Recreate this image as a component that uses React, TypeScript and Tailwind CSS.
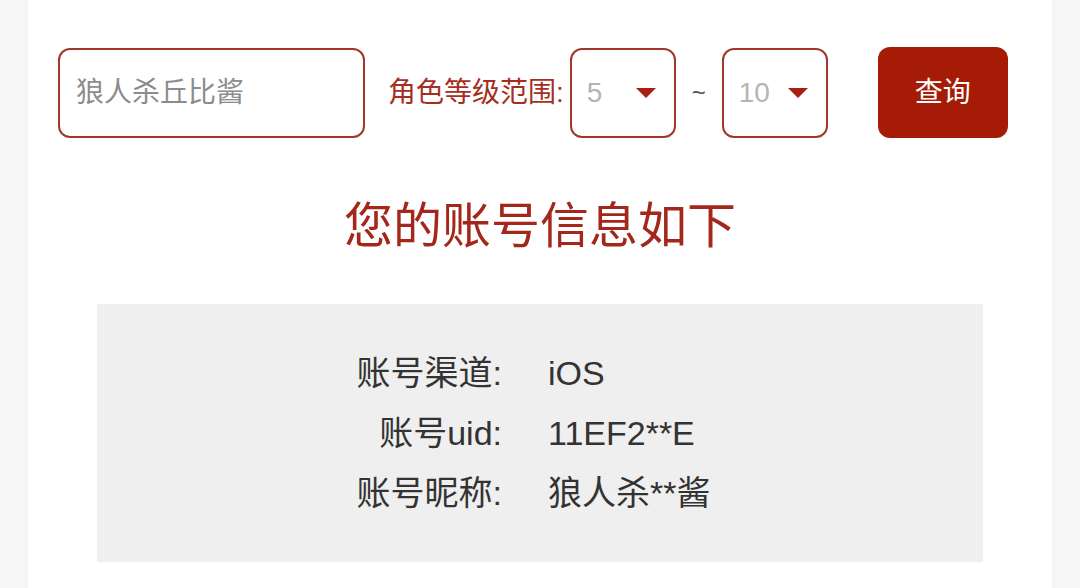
const font = { fontFamily: '"Liberation Sans", "Noto Sans CJK SC", sans-serif' };

function Caret() {
  return (
    <svg width="20" height="10" viewBox="0 0 20 10" className="shrink-0">
      <path d="M0 0 H20 L10 10 Z" fill="#a8200f" />
    </svg>
  );
}

function LevelSelect({ value }: { value: string }) {
  return (
    <div className="flex h-[90px] w-[106px] items-center justify-between rounded-[12px] border-2 border-[#a3362b] bg-white pl-[15px] pr-[18px]">
      <span className="text-[28px] text-[#b4b4b4]">{value}</span>
      <Caret />
    </div>
  );
}

const rows = [
  ["账号渠道:", "iOS"],
  ["账号uid:", "11EF2**E"],
  ["账号昵称:", "狼人杀**酱"],
];

export default function App() {
  return (
    <div className="h-[588px] w-[1080px] overflow-hidden bg-[#f6f6f6]" style={font}>
      <div className="ml-[28px] h-full w-[1024px] bg-white pt-[47px]">
        <div className="flex items-center pl-[30px]">
          <div className="flex h-[90px] w-[307px] items-center rounded-[12px] border-2 border-[#a3362b] pl-[16px]">
            <span className="text-[28px] text-[#8c8c8c]">狼人杀丘比酱</span>
          </div>
          <span className="ml-[23px] mr-[6px] text-[28px] text-[#a52e1f]">角色等级范围:</span>
          <LevelSelect value="5" />
          <span className="w-[46px] text-center text-[24px] text-[#555]">~</span>
          <LevelSelect value="10" />
          <button className="ml-[50px] h-[91px] w-[130px] rounded-[12px] bg-[#a51b06] text-[28px] text-white">
            查询
          </button>
        </div>

        <h1 className="mt-[58px] text-center text-[49px] leading-[60px] text-[#a3271a]">
          您的账号信息如下
        </h1>

        <div className="ml-[69px] mt-[48px] h-[258px] w-[886px] bg-[#efefef] py-[39px]">
          <div className="grid grid-cols-[405px_1fr] gap-x-[46px] text-[34px] leading-[60px] text-[#333]">
            {rows.map(([k, v]) => (
              <div key={k} className="contents">
                <span className="text-right">{k}</span>
                <span>{v}</span>
              </div>
            ))}
          </div>
        </div>
      </div>
    </div>
  );
}
